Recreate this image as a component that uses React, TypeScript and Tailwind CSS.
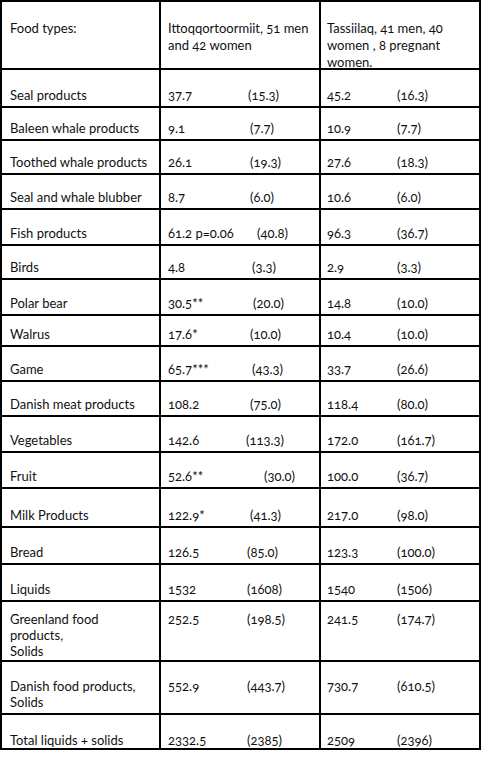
import React from "react";

type Row = {
  label: string[];
  a: [string, string];
  b: [string, string];
  h: string;
  aw: string;
  top?: string;
};

const rows: Row[] = [
  { label: ["Seal products"], a: ["37.7", "(15.3)"], b: ["45.2", "(16.3)"], h: "h-[38px]", aw: "w-[80px]" },
  { label: ["Baleen whale products"], a: ["9.1", "(7.7)"], b: ["10.9", "(7.7)"], h: "h-[33px]", aw: "w-[82px]" },
  { label: ["Toothed whale products"], a: ["26.1", "(19.3)"], b: ["27.6", "(18.3)"], h: "h-[34px]", aw: "w-[82px]" },
  { label: ["Seal and whale blubber"], a: ["8.7", "(6.0)"], b: ["10.6", "(6.0)"], h: "h-[35px]", aw: "w-[82px]" },
  { label: ["Fish products"], a: ["61.2 p=0.06", "(40.8)"], b: ["96.3", "(36.7)"], h: "h-[36px]", aw: "w-[89px]" },
  { label: ["Birds"], a: ["4.8", "(3.3)"], b: ["2.9", "(3.3)"], h: "h-[34px]", aw: "w-[84px]" },
  { label: ["Polar bear"], a: ["30.5**", "(20.0)"], b: ["14.8", "(10.0)"], h: "h-[36px]", aw: "w-[85px]" },
  { label: ["Walrus"], a: ["17.6*", "(10.0)"], b: ["10.4", "(10.0)"], h: "h-[31px]", aw: "w-[82px]" },
  { label: ["Game"], a: ["65.7***", "(43.3)"], b: ["33.7", "(26.6)"], h: "h-[35px]", aw: "w-[84px]" },
  { label: ["Danish meat products"], a: ["108.2", "(75.0)"], b: ["118.4", "(80.0)"], h: "h-[35px]", aw: "w-[82px]" },
  { label: ["Vegetables"], a: ["142.6", "(113.3)"], b: ["172.0", "(161.7)"], h: "h-[36px]", aw: "w-[78px]" },
  { label: ["Fruit"], a: ["52.6**", "(30.0)"], b: ["100.0", "(36.7)"], h: "h-[36px]", aw: "w-[96px]" },
  { label: ["Milk Products"], a: ["122.9*", "(41.3)"], b: ["217.0", "(98.0)"], h: "h-[39px]", aw: "w-[82px]" },
  { label: ["Bread"], a: ["126.5", "(85.0)"], b: ["123.3", "(100.0)"], h: "h-[37px]", aw: "w-[79px]" },
  { label: ["Liquids"], a: ["1532", "(1608)"], b: ["1540", "(1506)"], h: "h-[37px]", aw: "w-[79px]" },
  { label: ["Greenland food", "products,", "Solids"], a: ["252.5", "(198.5)"], b: ["241.5", "(174.7)"], h: "h-[60px]", aw: "w-[79px]", top: "pt-[9px]" },
  { label: ["Danish food products,", "Solids"], a: ["552.9", "(443.7)"], b: ["730.7", "(610.5)"], h: "h-[53px]", aw: "w-[79px]", top: "pt-[16px]" },
  { label: ["Total liquids + solids"], a: ["2332.5", "(2385)"], b: ["2509", "(2396)"], h: "h-[33px]", aw: "w-[79px]" },
];

function Cell({ children, className }: { children: React.ReactNode; className: string }) {
  return <div className={`flex border-r-2 border-black ${className}`}>{children}</div>;
}

export default function App() {
  return (
    <div className="min-h-[764px] w-[489px] bg-white font-['Lato','Noto_Sans',sans-serif] text-[13px] leading-[16px] text-[#111] oldstyle-nums">
      <div className="w-[481px] border-2 border-black">
        <div className="grid h-[68px] grid-cols-[159px_160px_158px] border-b-2 border-black">
          <Cell className="pl-[8px] pt-[18px]">Food types:</Cell>
          <Cell className="pl-[7px] pt-[18px] leading-[17px]">
            <div>
              Ittoqqortoormiit, 51 men
              <br />
              and 42 women
            </div>
          </Cell>
          <div className="flex pl-[6px] pt-[18px] leading-[17px]">
            <div>
              Tassiilaq, 41 men, 40
              <br />
              women , 8 pregnant
              <br />
              women.
            </div>
          </div>
        </div>
        {rows.map((r, i) => {
          const last = i === rows.length - 1;
          const align = r.top ? `items-start ${r.top}` : last ? "items-end pb-0" : "items-end pb-[3px]";
          return (
            <div
              key={r.label.join(" ")}
              className={`grid grid-cols-[159px_160px_158px] ${r.h} ${last ? "" : "border-b-2 border-black"}`}
            >
              <Cell className={`pl-[8px] ${align}`}>
                <div>
                  {r.label.map((l) => (
                    <div key={l}>{l}</div>
                  ))}
                </div>
              </Cell>
              <Cell className={`pl-[7px] ${align}`}>
                <span className={r.aw}>{r.a[0]}</span>
                <span>{r.a[1]}</span>
              </Cell>
              <div className={`flex pl-[6px] ${align}`}>
                <span className="w-[70px]">{r.b[0]}</span>
                <span>{r.b[1]}</span>
              </div>
            </div>
          );
        })}
      </div>
    </div>
  );
}
